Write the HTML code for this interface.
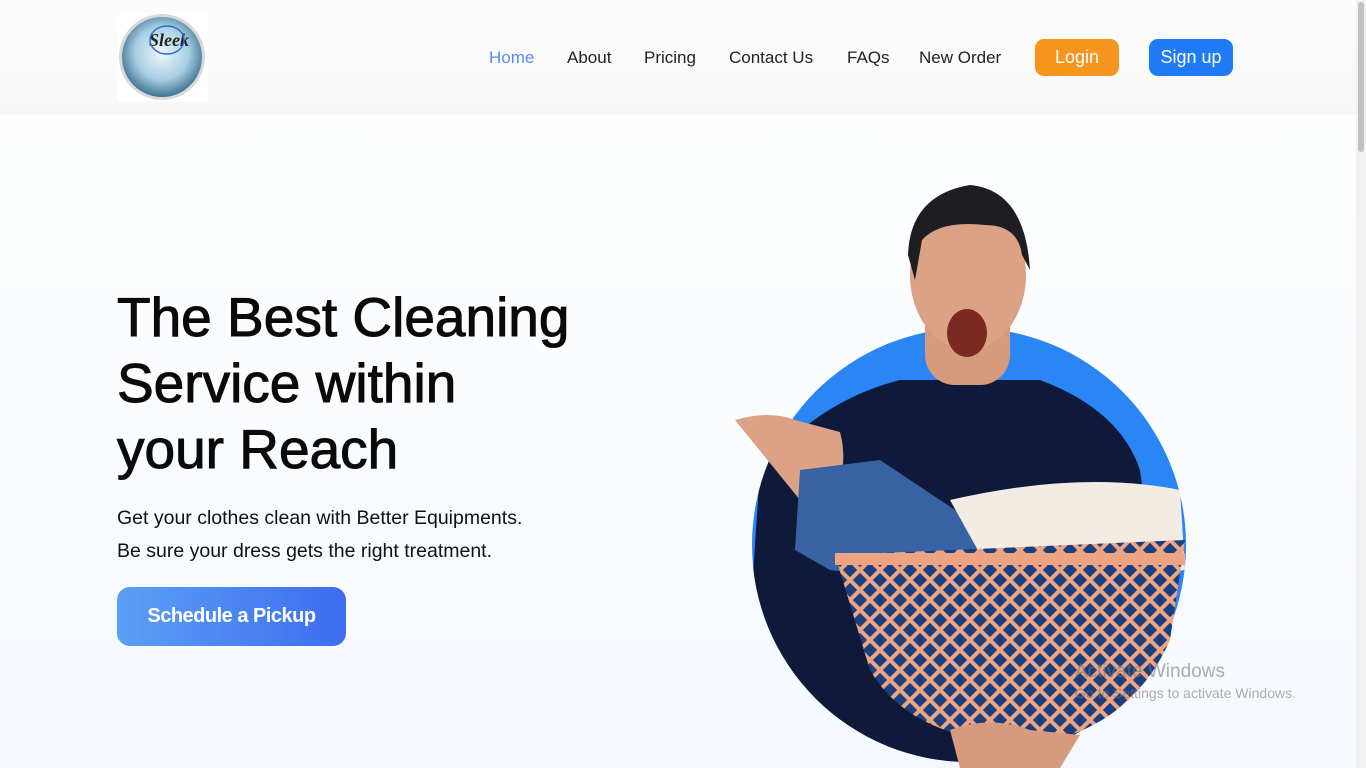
<!DOCTYPE html>
<html><head><style>
*{margin:0;padding:0;box-sizing:border-box}
body{width:1366px;height:768px;overflow:hidden;background:linear-gradient(#fff,#f5f9fe);font-family:"Liberation Sans",sans-serif;position:relative;color:#111}
header{position:absolute;left:0;top:0;width:1366px;height:114px;background:linear-gradient(#fdfdfd,#f7f7f7)}
.logo{position:absolute;left:117px;top:13px;width:91px;height:89px;background:#fff}
nav a{position:absolute;top:48px;font-size:17px;color:#222;text-decoration:none}
.btn{position:absolute;top:39px;height:37px;border-radius:9px;color:#fff;font-size:18px;text-align:center;line-height:37px}
h1{position:absolute;left:117px;top:284px;font-size:55px;line-height:66px;font-weight:normal;color:#0a0a0a;-webkit-text-stroke:1px #0a0a0a}
p{position:absolute;left:117px;font-size:19.5px;color:#111}
.cta{position:absolute;left:117px;top:587px;width:229px;height:59px;border-radius:13px;background:linear-gradient(90deg,#5aa0f5,#3d6df0);color:#fff;font-size:20px;font-weight:bold;text-align:center;line-height:59px;letter-spacing:-.5px}
.sb{position:absolute;right:0;top:0;width:10px;height:768px;background:#f1f1f1}
.sb div{position:absolute;left:2px;top:2px;width:6px;height:150px;background:#c1c1c1;border-radius:3px}
.wm{position:absolute;left:1075px;color:rgba(120,120,120,.6)}
</style></head><body>
<header>
<div class="logo"><svg width="91" height="89"><defs><radialGradient id="g" cx=".5" cy=".45" r=".55"><stop offset="0" stop-color="#eef6fb"/><stop offset=".6" stop-color="#a9cfe4"/><stop offset="1" stop-color="#3f7393"/></radialGradient></defs><circle cx="45" cy="44" r="43" fill="#d8d8d8"/><circle cx="45" cy="44" r="40" fill="url(#g)"/><text x="32" y="33" font-family="Liberation Serif" font-style="italic" font-weight="bold" font-size="18" fill="#222">Sleek</text><ellipse cx="50" cy="27" rx="17" ry="14" fill="none" stroke="#2f6dc4" stroke-width="1.5"/></svg></div>
<nav>
<a style="left:489px;color:#5b8de8">Home</a>
<a style="left:567px">About</a>
<a style="left:644px">Pricing</a>
<a style="left:729px">Contact Us</a>
<a style="left:847px">FAQs</a>
<a style="left:919px">New Order</a>
</nav>
<div class="btn" style="left:1035px;width:84px;background:#f7961e">Login</div>
<div class="btn" style="left:1149px;width:84px;background:#1f7af5">Sign up</div>
</header>
<h1>The Best Cleaning<br>Service within<br>your Reach</h1>
<p style="top:507px">Get your clothes clean with Better Equipments.</p>
<p style="top:540px">Be sure your dress gets the right treatment.</p>
<div class="cta">Schedule a Pickup</div>
<svg style="position:absolute;left:700px;top:170px" width="666" height="598">
<defs><clipPath id="c"><circle cx="269" cy="375" r="217"/></clipPath>
<pattern id="w" width="20" height="20" patternUnits="userSpaceOnUse"><rect width="20" height="20" fill="#1b3f7e"/><path d="M0 0L20 20M20 0L0 20" stroke="#eca483" stroke-width="4"/></pattern></defs>
<circle cx="269" cy="375" r="217" fill="#2a86f5"/>
<g clip-path="url(#c)"><path d="M60 300 Q120 230 200 210 L340 210 Q420 240 440 300 L480 598 L40 598Z" fill="#0f1a3a"/></g>
<rect x="225" y="120" width="85" height="95" rx="30" fill="#d69a7c"/>
<ellipse cx="268" cy="105" rx="58" ry="75" fill="#dba285"/>
<path d="M208 85 Q210 25 270 15 Q325 20 330 100 L322 85 Q318 55 285 55 Q240 50 222 70 L215 110Z" fill="#1d1d22"/>
<ellipse cx="267" cy="163" rx="20" ry="24" fill="#7a2a22"/>
<path d="M35 250 Q70 240 95 250 L140 262 Q150 300 130 330 L100 330 Z" fill="#dba285"/>
<path d="M100 300 L180 290 L300 370 L290 420 L130 400 L95 380Z" fill="#3763a5"/>
<path d="M250 330 Q380 300 480 320 L485 400 L300 420Z" fill="#f2ece4"/>
<path d="M135 385 L485 370 L470 470 Q430 560 330 575 Q210 570 170 500Z" fill="url(#w)"/>
<rect x="135" y="383" width="350" height="12" fill="#eca483"/>
<path d="M250 560 Q290 545 330 560 L380 565 L360 598 L260 598Z" fill="#d69a7c"/>
</svg>
<div class="wm" style="top:661px;font-size:19px">Activate Windows</div>
<div class="wm" style="top:685px;font-size:14px">Go to Settings to activate Windows.</div>
<div class="sb"><div></div></div>
</body></html>
